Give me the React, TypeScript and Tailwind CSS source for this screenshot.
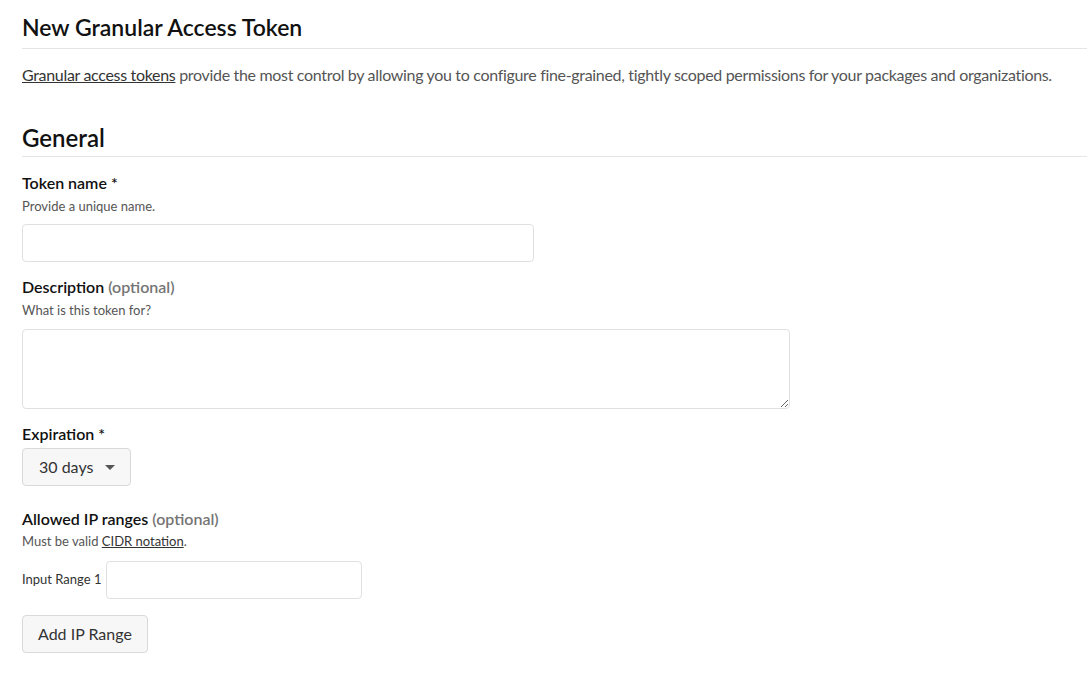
import { useState } from 'react';

const FONT = "font-['Lato','Liberation_Sans',sans-serif]";

function FieldLabel({ text, optional, required }: { text: string; optional?: boolean; required?: boolean }) {
  return (
    <p className="text-[16px] font-semibold text-[#111] leading-[20px]">
      {text}
      {required && ' *'}
      {optional && <span className="text-[#757575]"> (optional)</span>}
    </p>
  );
}

export default function App() {
  const [name, setName] = useState('');
  const [desc, setDesc] = useState('');
  const [range, setRange] = useState('');

  return (
    <div className={`min-h-screen bg-white ${FONT} text-[#111]`}>
      <div className="pl-[22px]">
        <h1 className="text-[23px] font-semibold leading-[30px] pt-[12px] pb-[6px] border-b border-[#e5e5e5]">
          New Granular Access Token
        </h1>
        <p className="text-[16px] tracking-[-0.32px] whitespace-nowrap text-[#555] leading-[24px] mt-[14px]">
          <a href="#" className="underline text-[#333]">Granular access tokens</a> provide the most control by allowing
          you to configure fine-grained, tightly scoped permissions for your packages and organizations.
        </p>

        <h2 className="text-[24px] font-semibold leading-[30px] mt-[36px] pb-[3px] border-b border-[#e5e5e5]">
          General
        </h2>

        <div className="mt-[16px]">
          <FieldLabel text="Token name" required />
          <p className="text-[13px] text-[#555] mt-[4px] leading-[18px]">Provide a unique name.</p>
          <input
            value={name}
            onChange={(e) => setName(e.target.value)}
            className="mt-[9px] block w-[512px] h-[38px] rounded border border-[#e0e0e0] px-3 outline-none"
          />
        </div>

        <div className="mt-[15px]">
          <FieldLabel text="Description" optional />
          <p className="text-[13px] text-[#555] mt-[4px] leading-[18px]">What is this token for?</p>
          <textarea
            value={desc}
            onChange={(e) => setDesc(e.target.value)}
            className="mt-[10px] block w-[768px] h-[80px] rounded border border-[#e0e0e0] px-3 py-2 outline-none"
          />
        </div>

        <div className="mt-[15px]">
          <FieldLabel text="Expiration" required />
          <button className="mt-[4px] flex items-center gap-[12px] h-[38px] w-[109px] pl-[16px] rounded border border-[#d9d9d9] bg-[#f7f7f7] text-[16px] text-[#333]">
            30 days
            <svg width="10" height="5" viewBox="0 0 10 5">
              <path d="M0 0h10L5 5z" fill="#555" />
            </svg>
          </button>
        </div>

        <div className="mt-[23px]">
          <FieldLabel text="Allowed IP ranges" optional />
          <p className="text-[13px] text-[#555] mt-[3px] leading-[18px]">
            Must be valid <a href="#" className="underline text-[#333]">CIDR notation</a>.
          </p>
          <div className="mt-[11px] flex items-center gap-[5px]">
            <label className="text-[13px] text-[#333]">Input Range 1</label>
            <input
              value={range}
              onChange={(e) => setRange(e.target.value)}
              className="block w-[256px] h-[38px] rounded border border-[#e0e0e0] px-3 outline-none"
            />
          </div>
          <button className="mt-[16px] h-[38px] px-[15px] rounded border border-[#d9d9d9] bg-[#f7f7f7] text-[16px] text-[#333]">
            Add IP Range
          </button>
        </div>
      </div>
    </div>
  );
}
